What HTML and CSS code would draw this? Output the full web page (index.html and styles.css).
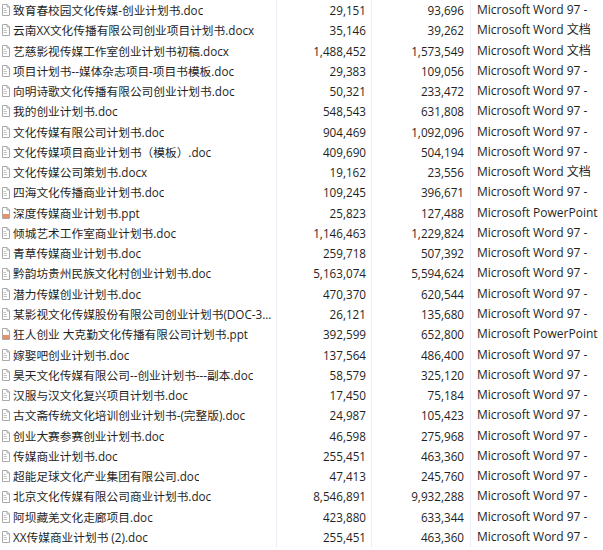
FILE: index.html
```html
<!DOCTYPE html>
<html lang="zh-CN">
<head>
<meta charset="utf-8">
<title>文件列表</title>
<link rel="stylesheet" href="styles.css">
</head>
<body>
<svg width="0" height="0" class="defs" aria-hidden="true">
  <defs>
    <symbol id="doc" viewBox="0 0 8 12">
      <path d="M0.5 0.5H5L7.5 3V11.5H0.5Z" fill="#fff" stroke="#a9a9a9"/>
      <path d="M5 0.5V3H7.5" fill="none" stroke="#a9a9a9"/>
      <path d="M1.5 4.5H4M1.5 6.5H5M1.5 8.5H5" stroke="#c4c4c4"/>
    </symbol>
    <symbol id="ppt" viewBox="0 0 8 12">
      <path d="M0.5 0.5H5L7.5 3V11.5H0.5Z" fill="#fff" stroke="#a9a9a9"/>
      <path d="M5 0.5V3H7.5" fill="none" stroke="#a9a9a9"/>
      <rect x="1" y="7" width="6" height="4" fill="#e9906a"/>
    </symbol>
  </defs>
</svg>
<div class="list">
  <div class="row"><div class="name"><svg class="ico"><use href="#doc"/></svg><span class="txt">致育春校园文化传媒-创业计划书.doc</span></div><div class="num">29,151</div><div class="num size">93,696</div><div class="type"><span class="clip">Microsoft Word 97 - 2003 文档</span></div></div>
  <div class="row"><div class="name"><svg class="ico"><use href="#doc"/></svg><span class="txt">云南XX文化传播有限公司创业项目计划书.docx</span></div><div class="num">35,146</div><div class="num size">39,262</div><div class="type">Microsoft Word 文档</div></div>
  <div class="row"><div class="name"><svg class="ico"><use href="#doc"/></svg><span class="txt">艺慈影视传媒工作室创业计划书初稿.docx</span></div><div class="num">1,488,452</div><div class="num size">1,573,549</div><div class="type">Microsoft Word 文档</div></div>
  <div class="row"><div class="name"><svg class="ico"><use href="#doc"/></svg><span class="txt">项目计划书--媒体杂志项目-项目书模板.doc</span></div><div class="num">29,383</div><div class="num size">109,056</div><div class="type"><span class="clip">Microsoft Word 97 - 2003 文档</span></div></div>
  <div class="row"><div class="name"><svg class="ico"><use href="#doc"/></svg><span class="txt">向明诗歌文化传播有限公司创业计划书.doc</span></div><div class="num">50,321</div><div class="num size">233,472</div><div class="type"><span class="clip">Microsoft Word 97 - 2003 文档</span></div></div>
  <div class="row"><div class="name"><svg class="ico"><use href="#doc"/></svg><span class="txt">我的创业计划书.doc</span></div><div class="num">548,543</div><div class="num size">631,808</div><div class="type"><span class="clip">Microsoft Word 97 - 2003 文档</span></div></div>
  <div class="row"><div class="name"><svg class="ico"><use href="#doc"/></svg><span class="txt">文化传媒有限公司计划书.doc</span></div><div class="num">904,469</div><div class="num size">1,092,096</div><div class="type"><span class="clip">Microsoft Word 97 - 2003 文档</span></div></div>
  <div class="row"><div class="name"><svg class="ico"><use href="#doc"/></svg><span class="txt">文化传媒项目商业计划书（模板）.doc</span></div><div class="num">409,690</div><div class="num size">504,194</div><div class="type"><span class="clip">Microsoft Word 97 - 2003 文档</span></div></div>
  <div class="row"><div class="name"><svg class="ico"><use href="#doc"/></svg><span class="txt">文化传媒公司策划书.docx</span></div><div class="num">19,162</div><div class="num size">23,556</div><div class="type">Microsoft Word 文档</div></div>
  <div class="row"><div class="name"><svg class="ico"><use href="#doc"/></svg><span class="txt">四海文化传播商业计划书.doc</span></div><div class="num">109,245</div><div class="num size">396,671</div><div class="type"><span class="clip">Microsoft Word 97 - 2003 文档</span></div></div>
  <div class="row"><div class="name"><svg class="ico"><use href="#ppt"/></svg><span class="txt">深度传媒商业计划书.ppt</span></div><div class="num">25,823</div><div class="num size">127,488</div><div class="type">Microsoft PowerPoint 97-2003 演示文稿</div></div>
  <div class="row"><div class="name"><svg class="ico"><use href="#doc"/></svg><span class="txt">倾城艺术工作室商业计划书.doc</span></div><div class="num">1,146,463</div><div class="num size">1,229,824</div><div class="type"><span class="clip">Microsoft Word 97 - 2003 文档</span></div></div>
  <div class="row"><div class="name"><svg class="ico"><use href="#doc"/></svg><span class="txt">青草传媒商业计划书.doc</span></div><div class="num">259,718</div><div class="num size">507,392</div><div class="type"><span class="clip">Microsoft Word 97 - 2003 文档</span></div></div>
  <div class="row"><div class="name"><svg class="ico"><use href="#doc"/></svg><span class="txt">黔韵坊贵州民族文化村创业计划书.doc</span></div><div class="num">5,163,074</div><div class="num size">5,594,624</div><div class="type"><span class="clip">Microsoft Word 97 - 2003 文档</span></div></div>
  <div class="row"><div class="name"><svg class="ico"><use href="#doc"/></svg><span class="txt">潜力传媒创业计划书.doc</span></div><div class="num">470,370</div><div class="num size">620,544</div><div class="type"><span class="clip">Microsoft Word 97 - 2003 文档</span></div></div>
  <div class="row"><div class="name"><svg class="ico"><use href="#doc"/></svg><span class="txt">某影视文化传媒股份有限公司创业计划书(DOC-3...</span></div><div class="num">26,121</div><div class="num size">135,680</div><div class="type"><span class="clip">Microsoft Word 97 - 2003 文档</span></div></div>
  <div class="row"><div class="name"><svg class="ico"><use href="#ppt"/></svg><span class="txt">狂人创业 大克勤文化传播有限公司计划书.ppt</span></div><div class="num">392,599</div><div class="num size">652,800</div><div class="type">Microsoft PowerPoint 97-2003 演示文稿</div></div>
  <div class="row"><div class="name"><svg class="ico"><use href="#doc"/></svg><span class="txt">嫁娶吧创业计划书.doc</span></div><div class="num">137,564</div><div class="num size">486,400</div><div class="type"><span class="clip">Microsoft Word 97 - 2003 文档</span></div></div>
  <div class="row"><div class="name"><svg class="ico"><use href="#doc"/></svg><span class="txt">昊天文化传媒有限公司--创业计划书---副本.doc</span></div><div class="num">58,579</div><div class="num size">325,120</div><div class="type"><span class="clip">Microsoft Word 97 - 2003 文档</span></div></div>
  <div class="row"><div class="name"><svg class="ico"><use href="#doc"/></svg><span class="txt">汉服与汉文化复兴项目计划书.doc</span></div><div class="num">17,450</div><div class="num size">75,184</div><div class="type"><span class="clip">Microsoft Word 97 - 2003 文档</span></div></div>
  <div class="row"><div class="name"><svg class="ico"><use href="#doc"/></svg><span class="txt">古文斋传统文化培训创业计划书-(完整版).doc</span></div><div class="num">24,987</div><div class="num size">105,423</div><div class="type"><span class="clip">Microsoft Word 97 - 2003 文档</span></div></div>
  <div class="row"><div class="name"><svg class="ico"><use href="#doc"/></svg><span class="txt">创业大赛参赛创业计划书.doc</span></div><div class="num">46,598</div><div class="num size">275,968</div><div class="type"><span class="clip">Microsoft Word 97 - 2003 文档</span></div></div>
  <div class="row"><div class="name"><svg class="ico"><use href="#doc"/></svg><span class="txt">传媒商业计划书.doc</span></div><div class="num">255,451</div><div class="num size">463,360</div><div class="type"><span class="clip">Microsoft Word 97 - 2003 文档</span></div></div>
  <div class="row"><div class="name"><svg class="ico"><use href="#doc"/></svg><span class="txt">超能足球文化产业集团有限公司.doc</span></div><div class="num">47,413</div><div class="num size">245,760</div><div class="type"><span class="clip">Microsoft Word 97 - 2003 文档</span></div></div>
  <div class="row"><div class="name"><svg class="ico"><use href="#doc"/></svg><span class="txt">北京文化传媒有限公司商业计划书.doc</span></div><div class="num">8,546,891</div><div class="num size">9,932,288</div><div class="type"><span class="clip">Microsoft Word 97 - 2003 文档</span></div></div>
  <div class="row"><div class="name"><svg class="ico"><use href="#doc"/></svg><span class="txt">阿坝藏羌文化走廊项目.doc</span></div><div class="num">423,880</div><div class="num size">633,344</div><div class="type"><span class="clip">Microsoft Word 97 - 2003 文档</span></div></div>
  <div class="row"><div class="name"><svg class="ico"><use href="#doc"/></svg><span class="txt">XX传媒商业计划书 (2).doc</span></div><div class="num">255,451</div><div class="num size">463,360</div><div class="type"><span class="clip">Microsoft Word 97 - 2003 文档</span></div></div>
</div>
</body>
</html>
```

FILE: styles.css
```css
html, body {
  margin: 0;
  padding: 0;
  background: #fff;
  overflow: hidden;
}
body {
  width: 603px;
  height: 550px;
  font-family: "Open Sans", "Noto Sans CJK SC", sans-serif;
  font-size: 11.7px;
  color: #1f1f1f;
}
.defs {
  position: absolute;
  width: 0;
  height: 0;
}
.list {
  width: 598px;
  overflow: hidden;
}
.row {
  display: grid;
  grid-template-columns: 277px 95px 99px 127px;
  height: 20.27px;
  line-height: 20.27px;
  white-space: nowrap;
}
.name {
  display: flex;
  align-items: center;
  gap: 3px;
  padding-left: 2px;
  border-right: 1px solid #eceef7;
  overflow: hidden;
}
.ico {
  width: 8px;
  height: 12px;
  flex: none;
}
.txt {
  overflow: hidden;
}
.num {
  text-align: right;
  padding-right: 5px;
  border-right: 1px solid #eceef7;
}
.size {
  padding-right: 6px;
}
.type {
  padding-left: 6px;
  font-size: 12px;
  overflow: hidden;
}
.clip {
  display: inline-block;
  vertical-align: top;
  max-width: 113px;
  overflow: hidden;
}
```
